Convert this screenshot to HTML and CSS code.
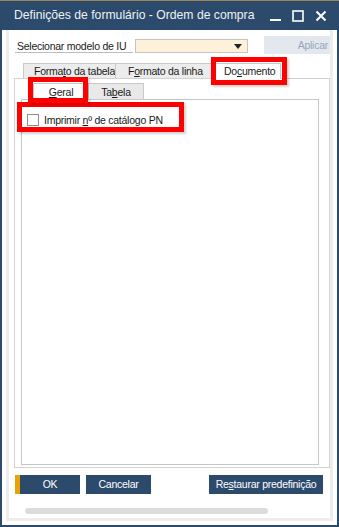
FILE: index.html
```html
<!DOCTYPE html>
<html lang="pt">
<head>
<meta charset="utf-8">
<title>Definições de formulário - Ordem de compra</title>
<link rel="stylesheet" href="styles.css">
</head>
<body>
<div class="window">
  <div class="titlebar">
    <span class="title">Definições de formulário - Ordem de compra</span>
    <div class="controls">
      <svg class="ctl" width="12" height="12" viewBox="0 0 12 12"><rect x="1" y="9" width="11" height="2" fill="#fff"/></svg>
      <svg class="ctl" width="12" height="12" viewBox="0 0 12 12"><rect x="1" y="1" width="10" height="10" fill="none" stroke="#fff" stroke-width="1.6"/></svg>
      <svg class="ctl" width="12" height="12" viewBox="0 0 12 12"><path d="M1.5 1.5 L10.5 10.5 M10.5 1.5 L1.5 10.5" stroke="#fff" stroke-width="2"/></svg>
    </div>
  </div>
  <div class="body">
    <div class="content">
      <div class="toprow">
        <div class="field-label">Selecionar modelo de IU</div>
        <div class="select"><span class="arrow"></span></div>
        <div class="apply">Aplicar</div>
      </div>
      <div class="tabs1">
        <div class="tab t-tabela">Forma<u>t</u>o da tabela</div>
        <div class="tab t-linha">F<u>o</u>rmato da linha</div>
        <div class="tab t-doc selected">Do<u>c</u>umento
          <span class="hl hl-doc"></span>
        </div>
      </div>
      <div class="panel-outer">
        <div class="tabs2">
          <div class="tab2 selected"><u>G</u>eral
            <span class="hl hl-geral"></span>
          </div>
          <div class="tab2">Ta<u>b</u>ela</div>
        </div>
        <div class="panel-inner">
          <div class="check-row">
            <span class="box"></span>
            <span class="check-label">Imprimir <u>n</u>º de catálogo PN</span>
            <span class="hl hl-check"></span>
          </div>
        </div>
      </div>
      <div class="buttons">
        <div class="btn btn-ok">OK</div>
        <div class="btn btn-cancel">Cancelar</div>
        <div class="btn btn-restore">Re<u>s</u>taurar predefinição</div>
      </div>
      <div class="scrollbar"></div>
    </div>
  </div>
</div>
</body>
</html>
```

FILE: styles.css
```css
* { box-sizing: border-box; }
html, body { margin: 0; padding: 0; background: #ffffff; }
body {
  width: 339px;
  height: 527px;
  overflow: hidden;
  font-family: "Liberation Sans", Arial, sans-serif;
  color: #1a1a1a;
}
u { text-decoration: underline; text-underline-offset: 1px; }

.window {
  width: 339px;
  height: 527px;
  display: flex;
  flex-direction: column;
}

.titlebar {
  height: 30px;
  background: #2c4a6b;
  border-top: 1px solid #9a8556;
  display: flex;
  align-items: center;
  padding-left: 14px;
  padding-right: 12px;
  flex: none;
}
.title {
  color: #eef2f6;
  font-size: 12.2px;
  flex: 1;
  white-space: nowrap;
  padding-bottom: 1px;
}
.controls {
  display: flex;
  gap: 11px;
  align-items: center;
}
.ctl { display: block; }

.body {
  flex: 1;
  background: #ffffff;
  border-left: 2px solid #2c4a6b;
  border-right: 2px solid #2c4a6b;
  border-bottom: 2px solid #2c4a6b;
  padding: 0 4px 4px 4px;
  display: flex;
}
.content {
  flex: 1;
  background: #ffffff;
  border-left: 3px solid #ededed;
  border-right: 3px solid #ededed;
  border-bottom: 3px solid #ededed;
  display: flex;
  flex-direction: column;
  font-size: 10.5px;
  letter-spacing: -0.25px;
}

/* top row */
.toprow {
  display: flex;
  align-items: flex-start;
  margin-top: 6px;
  height: 18px;
}
.field-label {
  margin-left: 6px;
  width: 118px;
  height: 17px;
  border-bottom: 1px solid #b9bec5;
  padding-left: 2px;
  padding-top: 4px;
  white-space: nowrap;
}
.select {
  margin-left: 2px;
  margin-top: 3px;
  width: 113px;
  height: 14px;
  background: #fdf2d9;
  border: 1px solid #c4c4c4;
  position: relative;
}
.arrow {
  position: absolute;
  right: 5px;
  top: 4px;
  width: 0;
  height: 0;
  border-left: 4px solid transparent;
  border-right: 4px solid transparent;
  border-top: 5px solid #222;
}
.apply {
  margin-left: 16px;
  width: 66px;
  height: 18px;
  background: #e3e8ee;
  color: #98a6b8;
  text-align: right;
  padding-right: 2px;
  padding-top: 3px;
}

/* first tab row */
.tabs1 {
  display: flex;
  margin-top: 9px;
  margin-left: 14px;
  height: 15px;
  position: relative;
  z-index: 2;
}
.tab {
  height: 15px;
  background: #ececec;
  border: 1px solid #c9c9c9;
  border-bottom: none;
  white-space: nowrap;
  overflow: hidden;
  padding-top: 1px;
  position: relative;
}
.t-tabela { width: 93px; padding-left: 10px; }
.t-linha { width: 96px; padding-left: 12px; border-left: none; }
.t-doc {
  width: 69px;
  padding-left: 12px;
  border-left: none;
  background: #ffffff;
  height: 16px;
  overflow: visible;
}

/* outer panel */
.panel-outer {
  margin-left: 5px;
  width: 316px;
  height: 390px;
  border: 1px solid #d2d2d2;
  display: flex;
  flex-direction: column;
  padding: 4px 0 2px 6px;
}
.tabs2 {
  display: flex;
  margin-left: 12px;
  height: 16px;
  position: relative;
  z-index: 2;
}
.tab2 {
  height: 16px;
  width: 56px;
  text-align: center;
  background: #e9e9e9;
  border: 1px solid #c9c9c9;
  border-bottom: none;
  padding-top: 2px;
  position: relative;
  white-space: nowrap;
}
.tab2 + .tab2 { border-left: none; width: 55px; }
.tab2.selected { background: #ffffff; height: 17px; }

.panel-inner {
  width: 298px;
  flex: 1;
  border: 1px solid #c6c6c6;
  padding: 14px 0 0 5px;
}
.check-row {
  display: flex;
  align-items: center;
  gap: 5px;
  position: relative;
  height: 12px;
}
.box {
  width: 12px;
  height: 12px;
  border: 1px solid #8e8e8e;
  background: #fff;
  flex: none;
}
.check-label { white-space: nowrap; }

/* highlight boxes (annotation overlays) */
.hl {
  position: absolute;
  border: 5px solid #ff0000;
  box-shadow: 2px 2px 2px rgba(0, 0, 0, 0.18);
  pointer-events: none;
}
.hl-doc { left: -1px; top: -7px; width: 76px; height: 28px; }
.hl-geral { left: -6px; top: -7px; width: 60px; height: 26px; }
.hl-check { left: -10px; top: -12px; width: 167px; height: 30px; }

/* buttons */
.buttons {
  display: flex;
  margin-top: 7px;
  margin-left: 6px;
  margin-right: 7px;
  height: 19px;
}
.btn {
  height: 19px;
  background: #2c4a6b;
  color: #ffffff;
  text-align: center;
  padding-top: 3px;
  white-space: nowrap;
}
.btn-ok { width: 65px; border-left: 5px solid #e8a202; }
.btn-cancel { width: 65px; margin-left: 6px; }
.btn-restore { width: 114px; margin-left: auto; }

.scrollbar {
  margin-top: 14px;
  margin-left: 16px;
  width: 243px;
  height: 6px;
  border-radius: 3px;
  background: #dcdcdc;
}
```
